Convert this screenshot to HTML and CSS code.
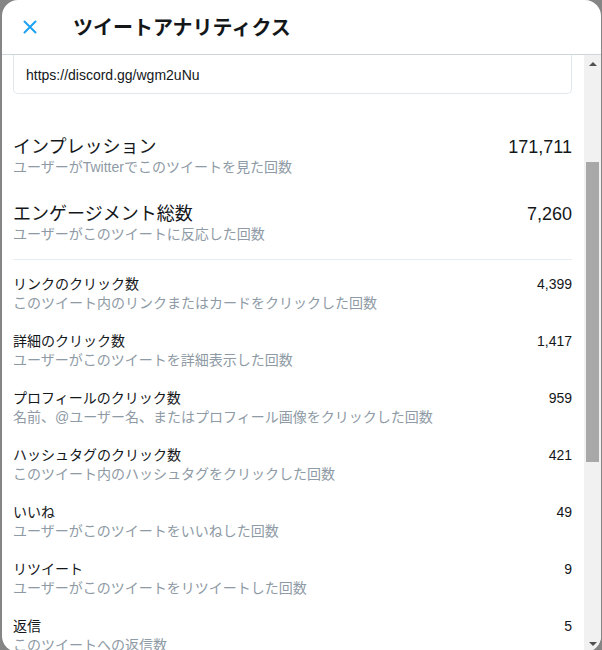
FILE: index.html
```html
<!DOCTYPE html>
<html lang="ja">
<head>
  <meta charset="UTF-8">
  <meta name="viewport" content="width=device-width, initial-scale=1.0">
  <title>ツイートアナリティクス</title>
  <link rel="stylesheet" href="styles.css">
</head>
<body>
  <div id="modal">
    <!-- ヘッダー -->
    <div id="header">
      <a class="closeBtn" href="#" aria-label="閉じる">
        <svg width="16" height="16" viewBox="0 0 16 16">
          <path d="M2.5 2.5 L13.5 13.5 M13.5 2.5 L2.5 13.5" stroke="#1da1f2" stroke-width="2" stroke-linecap="round" fill="none"/>
        </svg>
      </a>
      <h1>ツイートアナリティクス</h1>
    </div>

    <div id="body">
      <div id="content">
        <!-- ツイートのプレビュー -->
        <div class="tweetCard">https://discord.gg/wgm2uNu</div>

        <!-- 主な指標 -->
        <div class="metrics mainMetrics">
          <div class="metric">
            <div>
              <div class="metricName">インプレッション</div>
              <div class="metricDesc">ユーザーがTwitterでこのツイートを見た回数</div>
            </div>
            <div class="metricValue">171,711</div>
          </div>
          <div class="metric">
            <div>
              <div class="metricName">エンゲージメント総数</div>
              <div class="metricDesc">ユーザーがこのツイートに反応した回数</div>
            </div>
            <div class="metricValue">7,260</div>
          </div>
        </div>

        <div class="divider"></div>

        <!-- 詳細 -->
        <div class="metrics detailMetrics">
          <div class="metric">
            <div>
              <div class="metricName">リンクのクリック数</div>
              <div class="metricDesc">このツイート内のリンクまたはカードをクリックした回数</div>
            </div>
            <div class="metricValue">4,399</div>
          </div>
          <div class="metric">
            <div>
              <div class="metricName">詳細のクリック数</div>
              <div class="metricDesc">ユーザーがこのツイートを詳細表示した回数</div>
            </div>
            <div class="metricValue">1,417</div>
          </div>
          <div class="metric">
            <div>
              <div class="metricName">プロフィールのクリック数</div>
              <div class="metricDesc">名前、@ユーザー名、またはプロフィール画像をクリックした回数</div>
            </div>
            <div class="metricValue">959</div>
          </div>
          <div class="metric">
            <div>
              <div class="metricName">ハッシュタグのクリック数</div>
              <div class="metricDesc">このツイート内のハッシュタグをクリックした回数</div>
            </div>
            <div class="metricValue">421</div>
          </div>
          <div class="metric">
            <div>
              <div class="metricName">いいね</div>
              <div class="metricDesc">ユーザーがこのツイートをいいねした回数</div>
            </div>
            <div class="metricValue">49</div>
          </div>
          <div class="metric">
            <div>
              <div class="metricName">リツイート</div>
              <div class="metricDesc">ユーザーがこのツイートをリツイートした回数</div>
            </div>
            <div class="metricValue">9</div>
          </div>
          <div class="metric">
            <div>
              <div class="metricName">返信</div>
              <div class="metricDesc">このツイートへの返信数</div>
            </div>
            <div class="metricValue">5</div>
          </div>
        </div>
      </div>

      <!-- スクロールバー -->
      <div class="scrollbar">
        <div class="scrollBtn up"></div>
        <div class="scrollTrack">
          <div class="scrollThumb"></div>
        </div>
        <div class="scrollBtn down"></div>
      </div>
    </div>
  </div>
</body>
</html>
```

FILE: styles.css
```css
/* 全体 */
body {
  font-family: "Liberation Sans", "Noto Sans CJK JP", sans-serif;
  margin: 0;
  padding: 0 1px 0 2px;
  height: 650px;
  overflow: hidden;
  background-color: #858585;
  color: #14171a;
}
/* モーダル */
#modal {
  background-color: #fff;
  height: 652px;
  border-radius: 16px;
  overflow: hidden;
  display: flex;
  flex-direction: column;
}
/* ヘッダー */
#header {
  height: 54px;
  flex-shrink: 0;
  display: flex;
  align-items: center;
  border-bottom: 1px solid #ccd6dd;
}
.closeBtn {
  display: block;
  width: 16px;
  height: 16px;
  margin: 0 35px 0 20px;
}
.closeBtn svg {
  display: block;
}
#header h1 {
  margin: 0;
  font-size: 20px;
  font-weight: bold;
  line-height: 24px;
  padding-top: 2px;
}
#body {
  flex: 1;
  display: flex;
  min-height: 0;
}
#content {
  flex: 1;
  overflow: hidden;
  padding: 0 12px 0 11px;
}
/* ツイートカード */
.tweetCard {
  margin-top: -1px;
  padding: 11px 12px 8px;
  border: 1px solid #e1e8ed;
  border-top: none;
  border-radius: 0 0 5px 5px;
  font-size: 14px;
  line-height: 20px;
}
/* 指標 */
.metrics {
  display: flex;
  flex-direction: column;
}
.mainMetrics {
  padding-top: 42px;
  gap: 27px;
}
.detailMetrics {
  padding-top: 14px;
  gap: 19px;
}
.metric {
  display: flex;
  justify-content: space-between;
  align-items: flex-start;
}
.metricName {
  font-size: 14px;
  line-height: 20px;
}
.metricDesc {
  font-size: 14px;
  line-height: 18px;
  color: #8e9aa5;
}
.metricValue {
  font-size: 14px;
  line-height: 20px;
}
.mainMetrics .metricName,
.mainMetrics .metricValue {
  font-size: 18px;
  line-height: 22px;
}
.divider {
  margin-top: 16px;
  height: 1px;
  background-color: #e6ecf0;
}
/* スクロールバー */
.scrollbar {
  width: 17px;
  flex-shrink: 0;
  background-color: #f1f1f1;
  display: flex;
  flex-direction: column;
}
.scrollBtn {
  height: 17px;
  flex-shrink: 0;
  display: flex;
  align-items: center;
  justify-content: center;
}
.scrollBtn::before {
  content: "";
  border-left: 4px solid transparent;
  border-right: 4px solid transparent;
}
.scrollBtn.up::before {
  border-bottom: 4px solid #505050;
}
.scrollBtn.down::before {
  border-top: 4px solid #505050;
}
.scrollTrack {
  flex: 1;
}
.scrollThumb {
  margin: 90px 2px 0 2px;
  height: 300px;
  background-color: #a8a8a8;
}
```
